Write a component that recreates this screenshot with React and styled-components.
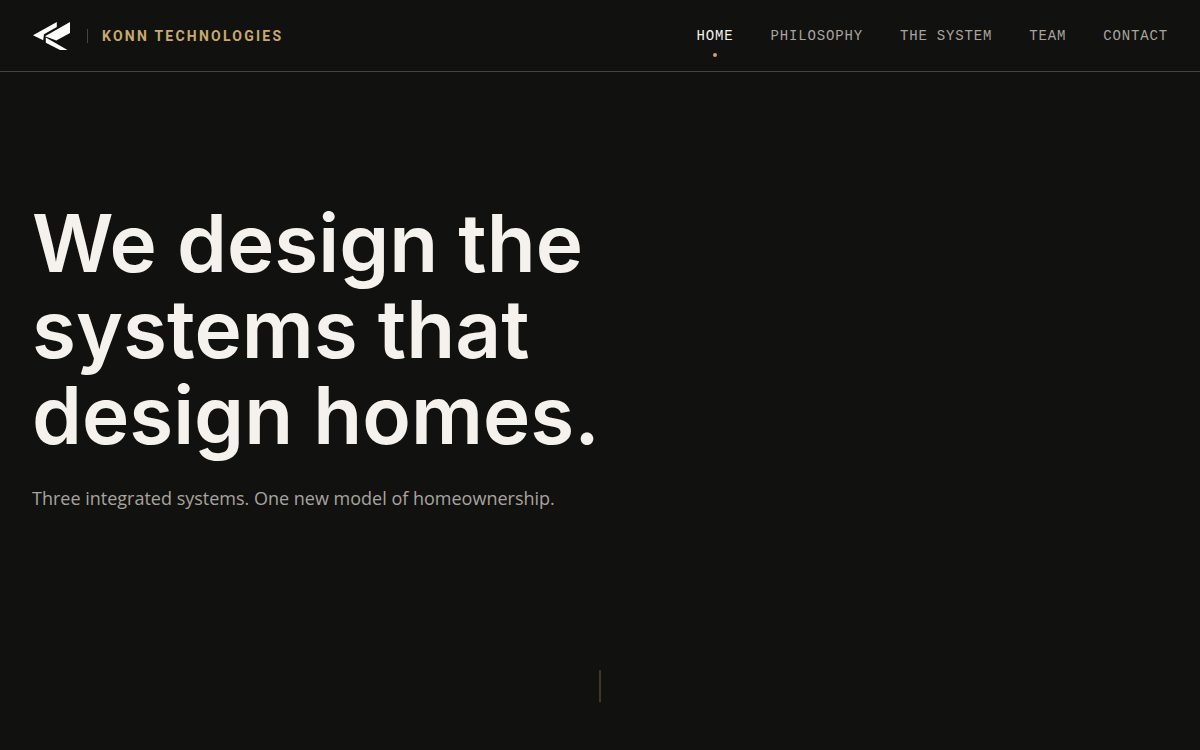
import React from 'react';
import styled, { createGlobalStyle } from 'styled-components';

const GlobalStyle = createGlobalStyle`
  * {
    box-sizing: border-box;
  }
  body {
    margin: 0;
    background: #11110f;
    color: #f5f2ed;
    font-family: Inter, sans-serif;
  }
`;

const Page = styled.div`
  display: flex;
  flex-direction: column;
  min-height: 100vh;
`;

const Header = styled.header`
  display: flex;
  align-items: center;
  justify-content: space-between;
  height: 72px;
  padding: 0 32px;
  border-bottom: 1px solid #444441;
`;

const Brand = styled.a`
  display: flex;
  align-items: center;
  gap: 14px;
  color: #c9a96e;
  text-decoration: none;
`;

const Logo = styled.svg`
  display: block;
  width: 41px;
  height: 32px;
  fill: #ffffff;
`;

const Divider = styled.span`
  width: 1px;
  height: 14px;
  background: #444441;
`;

const BrandName = styled.span`
  font-family: Roboto, sans-serif;
  font-size: 14px;
  line-height: 20px;
  font-weight: 700;
  letter-spacing: 0.16em;
`;

const Nav = styled.nav`
  display: flex;
  gap: 37px;
`;

const NavLink = styled.a`
  position: relative;
  color: ${({ $active }) => ($active ? '#f5f2ed' : '#a8a49e')};
  font-family: 'Liberation Mono', monospace;
  font-size: 14px;
  line-height: 20px;
  letter-spacing: 0.06em;
  text-decoration: none;
`;

const Dot = styled.span`
  position: absolute;
  bottom: -11px;
  left: 50%;
  width: 4px;
  height: 4px;
  margin-left: -2px;
  border-radius: 50%;
  background: #c9a07a;
`;

const Hero = styled.main`
  display: flex;
  flex: 1;
  flex-direction: column;
`;

const Copy = styled.div`
  display: flex;
  flex: 1;
  flex-direction: column;
  justify-content: center;
  gap: 26px;
  padding: 0 32px 30px;
`;

const Title = styled.h1`
  margin: 0;
  font-size: 80px;
  line-height: 86px;
  font-weight: 600;
`;

const Subtitle = styled.p`
  margin: 0;
  color: #a8a49e;
  font-family: 'Open Sans', sans-serif;
  font-size: 18px;
  line-height: 28px;
`;

const ScrollCue = styled.div`
  align-self: center;
  width: 2px;
  height: 32px;
  margin-bottom: 48px;
  background: #403729;
`;

const links = ['Home', 'Philosophy', 'The System', 'Team', 'Contact'];

function App() {
  return (
    <Page>
      <GlobalStyle />
      <Header>
        <Brand href="#home">
          <Logo viewBox="0 0 41 32" aria-hidden="true">
            <path d="M1 15.300 24.800 2v5L12 14.300l-.8 5.900z" />
            <path d="M38 2v11L24.300 20.500 13 16.200z" />
            <path d="M13.800 17.600 35.500 30h-7.500l-14.200-7.200z" />
          </Logo>
          <Divider />
          <BrandName>KONN TECHNOLOGIES</BrandName>
        </Brand>
        <Nav>
          {links.map((link, i) => (
            <NavLink key={link} href={`#${link.toLowerCase().replace(' ', '-')}`} $active={i === 0}>
              {link.toUpperCase()}
              {i === 0 && <Dot />}
            </NavLink>
          ))}
        </Nav>
      </Header>
      <Hero>
        <Copy>
          <Title>
            We design the
            <br />
            systems that
            <br />
            design homes.
          </Title>
          <Subtitle>Three integrated systems. One new model of homeownership.</Subtitle>
        </Copy>
        <ScrollCue />
      </Hero>
    </Page>
  );
}

export default App;
